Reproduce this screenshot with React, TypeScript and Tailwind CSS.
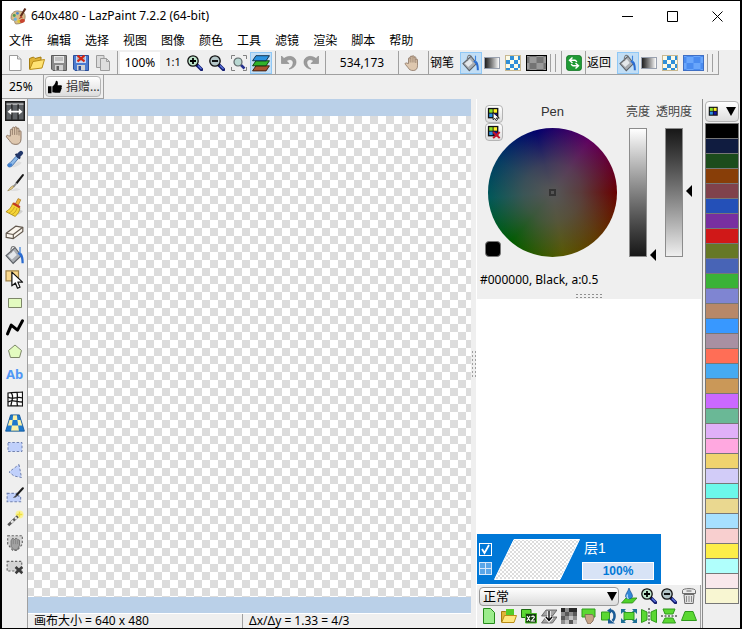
import { useState } from 'react';
import type { ReactNode } from 'react';
import clsx from 'clsx';

const MENUS = ['文件', '编辑', '选择', '视图', '图像', '颜色', '工具', '滤镜', '渲染', '脚本', '帮助'];

const PALETTE = [
  '#000000', '#101c40', '#1c4c1c', '#883e08', '#80424c', '#2450b8', '#782fa0', '#d01818',
  '#667826', '#4864b6', '#3ab237', '#7f85d2', '#b88868', '#3898ff', '#a890a2', '#ff6e56',
  '#46aaf2', '#ca9858', '#cb68ff', '#6ab896', '#e0b0f8', '#ffa8e0', '#f0d36e', '#d2ccf8',
  '#6cf8ea', '#ead890', '#a6e0ff', '#f8cfcf', '#fdee48', '#b0fffc', '#f9e8ec', '#f8f6d2',
];

function Svg({ size = 16, children }: { size?: number; children: ReactNode }) {
  return (
    <svg width={size} height={size} viewBox="0 0 16 16" fill="none" aria-hidden="true" className="shrink-0">
      {children}
    </svg>
  );
}

/* ---------- file icons ---------- */

function AppIcon() {
  return (
    <Svg size={17}>
      <path d="M1 9C1 4 5 2 9 3c4 0 6 3 5 7-1 4-5 5-8 5-2 0-1-2-2-3S1 12 1 9Z" fill="#d8bd8a" stroke="#8b7659" strokeWidth=".7" />
      <circle cx="4" cy="7" r="1.4" fill="#4f9d52" />
      <circle cx="7" cy="5" r="1.3" fill="#4a86cf" />
      <circle cx="5" cy="10.5" r="1.5" fill="#6bb4e2" />
      <circle cx="8.5" cy="12.5" r="1.5" fill="#dcc934" />
      <path d="M14.5 0.5 10 8" stroke="#5b2b1b" strokeWidth="2" />
      <path d="M10.5 7 8 10.5l4-1.5Z" fill="#b34a2e" />
      <path d="M9 12c2-3 5-2 5 0 0 1.5-2 2.5-4 2Z" fill="#c8452f" />
    </Svg>
  );
}

function NewIcon() {
  return (
    <Svg>
      <path d="M2.5 .5h8l3.5 3.500v11.500h-11.500Z" fill="#fff" stroke="#9a9a9a" />
      <path d="M10.5 .5V4H14" fill="#e8e8e8" stroke="#9a9a9a" />
    </Svg>
  );
}

function OpenIcon() {
  return (
    <Svg>
      <path d="M.5 14V3.5l4-1.5 1.5 1.5 6-1.5v3" fill="#e0b437" stroke="#a57c10" />
      <path d="M.7 14.5 4 6.5l11.5-2L13 13Z" fill="#ffe373" stroke="#b98d17" />
    </Svg>
  );
}

function FloppyIcon({ blue = false }: { blue?: boolean }) {
  return (
    <Svg>
      <path d="M.5 .5h15v15H2L.5 14Z" fill={blue ? '#4b7bd0' : '#8a8a8a'} stroke={blue ? '#2a4f9a' : '#5c5c5c'} />
      <path d="M3 1h10v7H3Z" fill={blue ? '#c8d8f4' : '#e6e6e6'} />
      <path d="M4 3h8M4 5h8" stroke="#9a9a9a" />
      <path d="M4 10h8v5.5H4Z" fill="#d2d2d2" />
      <path d="M5.5 11H8v4H5.5Z" fill={blue ? '#2a4f9a' : '#606060'} />
      {blue && <path d="m4.5 .5 7 6M11.5 .5l-7 6" stroke="#d42612" strokeWidth="2.2" />}
    </Svg>
  );
}

function CopyIcon() {
  return (
    <Svg>
      <path d="M1.5 .5H9v12H1.5Z" fill="#dcdcdc" stroke="#9c9c9c" />
      <path d="M5.5 3.5h6l3 3v9h-9Z" fill="#dedede" stroke="#9c9c9c" />
      <path d="M11.5 3.5v3h3" stroke="#9c9c9c" />
    </Svg>
  );
}

/* ---------- view icons ---------- */

function MagnifierIcon({ kind }: { kind: 'in' | 'out' }) {
  return (
    <Svg>
      <path d="m10 10 4.500 4.500" stroke="#111a6e" strokeWidth="3.4" strokeLinecap="round" />
      <path d="m11 10.500 3.500 3.500" stroke="#5d76e0" strokeWidth="1.2" />
      <circle cx="6" cy="6" r="5.2" fill={kind === 'in' ? '#bfe6cc' : '#b4c6c8'} stroke="#101010" strokeWidth="1.3" />
      <path d={kind === 'in' ? 'M3 6h6M6 3v6' : 'M3 6h6'} stroke="#000" strokeWidth="1.8" />
    </Svg>
  );
}

function FitIcon() {
  return (
    <Svg>
      <path d="M.5 4V.5H4M12 .5h3.500V4M15.500 12v3.500H12M4 15.500H.5V12" stroke="#808080" />
      <path d="m9.500 9.500 4 4" stroke="#26338f" strokeWidth="2.5" />
      <circle cx="7" cy="7" r="4" fill="#b9d8d2" stroke="#5d6668" strokeWidth="1.2" />
    </Svg>
  );
}

function LayersIcon() {
  return (
    <Svg size={18}>
      <path d="M3.5 10.5h12l-3 4.500H.5Z" fill="#a85430" stroke="#35180a" strokeWidth=".8" />
      <path d="M3.5 6h12l-3 4.500H.5Z" fill="#31b32a" stroke="#0a3a08" strokeWidth=".8" />
      <path d="M3.5 1.5h12l-3 4.500H.5Z" fill="#2b93e0" stroke="#08263f" strokeWidth=".8" />
    </Svg>
  );
}

function UndoIcon({ flip = false }: { flip?: boolean }) {
  return (
    <Svg>
      <g transform={flip ? 'matrix(-1 0 0 1 16 0)' : undefined}>
        <path d="M.5 1v7.500H8L5.500 6C9 3 13 5 12 9c-.5 2-2 4-4 5 4-.5 7-3 7-7 0-5.500-7-7.500-12-3.500Z" fill="#9b9b9b" stroke="#858585" strokeWidth=".6" />
      </g>
    </Svg>
  );
}

/* ---------- tool icons ---------- */

function HandIcon({ size = 16 }: { size?: number }) {
  return (
    <Svg size={size}>
      <path
        d="M4.500 8.500V3.600c0-1.200 1.700-1.200 1.700 0V2c0-1.300 1.900-1.300 1.900 0v-.4c0-1.300 1.900-1.300 1.900 0v1c0-1.200 1.800-1.200 1.800 0v2.200c0-1.100 1.700-1.100 1.700 0v6c0 3-1.500 4.700-4.300 4.700-2.700 0-4-.8-5.400-3.200L1.300 9.300c-.6-1.100.7-2 1.600-1.100Z"
        fill="#dec7ae"
        stroke="#8a7462"
        strokeWidth=".8"
      />
      <path d="M6.200 3.500v4M8.100 2v5.500M10 2.500v5M11.800 4.500v3.500" stroke="#8a7462" strokeWidth=".7" />
    </Svg>
  );
}

function BucketIcon({ size = 18 }: { size?: number }) {
  return (
    <Svg size={size}>
      <path d="M.8 8.500 8 2l5 6.500-6.500 6.300Z" fill="#a9adb2" stroke="#5c6066" strokeWidth=".9" />
      <path d="m2.500 8.500 4.500-4 2.500 3.500-4 3.500Z" fill="#e4e7ea" />
      <path d="M8 2c-2-2-4 0-3 4" stroke="#777" strokeWidth=".9" />
      <path d="M10 6.500c3-1.500 5 1 5 8h-1.800c0-3-.4-5-1.400-6Z" fill="#2a6bd0" />
      <path d="M12 1.500v5.500" stroke="#3f86e0" />
    </Svg>
  );
}

function PanelsIcon() {
  return (
    <Svg size={20}>
      <path d="M.5 .5h15v15H.5Z" fill="#5d6165" stroke="#1c1c1c" strokeWidth="1.3" />
      <path d="M1.200 2.500h13.600" stroke="#c9c9c9" />
      <path d="M5.500 2.500v12.500M10.500 2.500v12.500" stroke="#1b1b1b" />
      <path d="M4.500 8.500h7" stroke="#fff" strokeWidth="1.4" />
      <path d="M2 8.500 5 6v5ZM14 8.500 11 6v5Z" fill="#fff" />
    </Svg>
  );
}

function DropperIcon() {
  return (
    <Svg size={18}>
      <path d="M4 15c3 1 8-1 10-4l-3-1Z" fill="#dedede" />
      <path d="m9 5.500 2 2-5.500 6.500c-1.500 1.500-4 1.500-4-.3C1.500 12 3 11.800 4 11Z" fill="#8db9e8" stroke="#3f6ea8" strokeWidth=".8" />
      <path d="M3 12c-2 .5-2 3 0 3s3-2 2-3Z" fill="#3d7fd0" />
      <path d="m8.500 3.500 4 4" stroke="#18264a" strokeWidth="1.8" />
      <path d="m11 5 2.300-2.300" stroke="#22376a" strokeWidth="3.8" strokeLinecap="round" />
    </Svg>
  );
}

function PenIcon() {
  return (
    <Svg size={18}>
      <path d="M3 15c4 .5 8 0 10-1.500l-4-1Z" fill="#dedede" />
      <path d="M15 1 9.500 8" stroke="#1a1a1a" strokeWidth="1.8" strokeLinecap="round" />
      <path d="m9.500 8-3 3.500" stroke="#8e8e8e" strokeWidth="1.6" />
      <path d="M7 11c-.5 2-3 3-5.500 4C3 13 4 11.500 6 10.500Z" fill="#e6cc88" stroke="#6a5a30" strokeWidth=".4" />
    </Svg>
  );
}

function BroomIcon() {
  return (
    <Svg size={19}>
      <path d="M5 14c4 1.500 9-.5 10-3l-4-2Z" fill="#cfcfcf" />
      <path d="m11 .5 2.300 1-2.300 5-2.500-1.300Z" fill="#efb23a" stroke="#9a6a12" strokeWidth=".5" />
      <path d="m6.500 4.500 6 3.500c0 3-1.500 5.500-4 7.500L.8 11.500C3.800 10 5.500 7.500 6.500 4.500Z" fill="#f5d436" stroke="#a98812" strokeWidth=".7" />
      <path d="m6.800 4.500 5.700 3.300" stroke="#c23a20" strokeWidth="2" />
      <path d="M3.500 12.500c2-1 3.500-2.500 4.500-5M6 13.800c2-1 3.500-2.800 4-5.300" stroke="#b8921a" strokeWidth=".6" />
    </Svg>
  );
}

function EraserIcon() {
  return (
    <Svg size={19}>
      <path d="M1 9.500 9 3.500l6 1v3.500L7 14l-6-1Z" fill="#fbf6ee" stroke="#62584e" strokeLinejoin="round" />
      <path d="m1 9.500 6 1 8-6M7 10.500V14" stroke="#62584e" strokeLinejoin="round" />
    </Svg>
  );
}

function SelectShapeIcon() {
  return (
    <Svg size={20}>
      <path d="M.8 1.500h10v8H.8Z" fill="#fbd98c" stroke="#a08348" />
      <path d="M5.500 2.500v11l2.800-2.300 1.700 4.200 2-.9-1.700-4H14Z" fill="#fff" stroke="#111" strokeLinejoin="round" />
    </Svg>
  );
}

function RectIcon() {
  return (
    <Svg>
      <path d="M1.500 3.500h13v9h-13Z" fill="#e3fbc0" stroke="#7d8668" />
    </Svg>
  );
}

function PolylineIcon() {
  return (
    <Svg size={20}>
      <path d="M2 13.500 5 6.500l5 4L14 3" stroke="#000" strokeWidth="2.4" strokeLinecap="round" strokeLinejoin="round" />
    </Svg>
  );
}

function PolygonIcon() {
  return (
    <Svg>
      <path d="M8 2 14.500 7.500 12.500 14.500h-9L1.500 7.500Z" fill="#e3fbc0" stroke="#7d8668" />
    </Svg>
  );
}

function DeformIcon() {
  return (
    <Svg>
      <path d="M1 2c4-1 9-.5 14.500-1v14c-5-.5-10 0-14.500 0Z" fill="#fff" stroke="#111" strokeWidth="1.2" />
      <path d="M4 2c4 3 0 8 0 13M10 1.500c1.500 5-1 8 .5 13.500M1 6c4 3 9-1 14.500 1M1 11c5-3 9 0 14 0" stroke="#111" strokeWidth="1.3" />
    </Svg>
  );
}

function PerspectiveIcon() {
  return (
    <Svg size={20}>
      <path d="M4.500 1.500h7L15.500 14.500H.5Z" fill="#1d78cc" />
      <path d="M6.500 1.500h3l.4 4H6.100ZM3.300 5.500h2.800l-.6 4.500H2ZM9.900 5.500h2.900L14 10h-3.500ZM5.500 10h5l.7 4.500H4.800Z" fill="#fbf1a6" />
      <path d="M4.500 1.500h7L15.500 14.500H.5Z" stroke="#16599a" strokeWidth=".7" />
    </Svg>
  );
}

function SelRectIcon() {
  return (
    <Svg>
      <path d="M1 3.500h14v9H1Z" fill="#c0d0fb" stroke="#7182b0" strokeDasharray="2.500 1.800" />
    </Svg>
  );
}

function SelPolyIcon() {
  return (
    <Svg>
      <path d="m12 1.500 2.500 13L7 13 2 9Z" fill="#c0d0fb" stroke="#7182b0" strokeDasharray="2.500 1.800" />
    </Svg>
  );
}

function SelPenIcon() {
  return (
    <Svg size={18}>
      <path d="M1 6.500h10v2.500h2v5H1Z" fill="#c0d0fb" stroke="#7182b0" strokeDasharray="2.200 1.600" />
      <path d="M15 2 9.500 8" stroke="#1b1b1b" strokeWidth="1.8" strokeLinecap="round" />
      <path d="M9.500 7.500 6 10.500l2.500-.3 2-1.700Z" fill="#444" />
    </Svg>
  );
}

function WandIcon() {
  return (
    <Svg size={18}>
      <circle cx="12" cy="4" r="3.6" fill="#fbf39a" />
      <path d="M12 1.500v5M9.500 4h5" stroke="#f0e040" strokeWidth="1.2" />
      <path d="m2 13.500 8.500-8" stroke="#555" strokeWidth="2.4" />
      <path d="m4.500 11.200 2-1.900M8 7.900l1.500-1.400" stroke="#e8e8e8" strokeWidth="2" />
    </Svg>
  );
}

function SelHandIcon() {
  return (
    <Svg size={18}>
      <path d="M1.500 1.500h13V9L10 14.500H6L1.500 9Z" fill="#d4d4d4" stroke="#666" strokeDasharray="2 1.500" />
      <path d="M4.500 11V6l1.500-2.500L7.500 5 9 3.500 10.500 5 12 5.500V10l-2 4H7Z" fill="#a2a2a2" stroke="#6e6e6e" strokeWidth=".8" />
      <path d="M6.500 5v4M8.500 5v4M10.300 5.500V9" stroke="#7a7a7a" strokeWidth=".6" />
    </Svg>
  );
}

function SelClearIcon() {
  return (
    <Svg size={18}>
      <path d="M1 3h13v8.500H1Z" fill="#d4d4d4" stroke="#666" strokeDasharray="2 1.500" />
      <path d="m8.500 8 6 5.500M14.500 8l-6 5.500" stroke="#3b3b3b" strokeWidth="2.3" />
    </Svg>
  );
}

/* ---------- fill icons ---------- */

function GradientIcon() {
  return <span className="h-3 w-4 border border-gray-400 bg-linear-to-r from-[#202020] to-white" />;
}

function PatternIcon() {
  return (
    <span className="size-4 border border-[#c8b890] bg-[#fbfbe8] bg-[repeating-conic-gradient(#2f8fd8_0_25%,#fbfbe8_0_50%)] bg-[length:8px_8px]" />
  );
}

function TextureIcon({ blue = false }: { blue?: boolean }) {
  return (
    <span
      className={clsx(
        'h-4 w-[21px] border bg-[length:14px_12px] bg-center',
        blue
          ? 'border-[#3f6fc4] bg-[repeating-conic-gradient(#4a8cf0_0_25%,#69a6fb_0_50%)]'
          : 'border-black bg-[repeating-conic-gradient(#747474_0_25%,#9a9a9a_0_50%)]',
      )}
    />
  );
}

function SwapIcon() {
  return (
    <Svg>
      <rect x=".3" y=".3" width="15.4" height="15.4" rx="3.5" fill="#1f9a35" stroke="#0d6a20" strokeWidth=".7" />
      <path d="M6.500 2.500 3.500 5.300 6.500 8M3.500 5.300H9l2 1.500M9.500 8l3 2.700-3 2.800M12.500 10.700H7l-2-1.500" stroke="#fff" strokeWidth="1.4" />
    </Svg>
  );
}

function ThumbIcon() {
  return (
    <Svg size={14}>
      <path d="M0 7h4v8H0ZM5 7.500C7 6 8.500 4 9 1c1.500-.5 3 1 2 5h4c1.500.5 1 2 .4 2.300.6.9.3 1.900-.4 2.200.4.900 0 1.800-.7 2.100.2 1-.3 2.100-1.500 2.100H8.500L5 14Z" fill="#000" />
    </Svg>
  );
}

function ColorsIcon({ mark }: { mark?: 'pick' | 'remove' }) {
  return (
    <Svg size={mark ? 14 : 12}>
      <path d="M1 1h12v12H1Z" fill="#111" />
      <path d="M2.500 2.500h4v4h-4Z" fill="#8be22a" />
      <path d="M7.500 2.500h4v4h-4Z" fill="#fff12a" />
      <path d="M2.500 7.500h4v4h-4Z" fill="#2a8fe0" />
      <path d="M7.500 7.500h4v4h-4Z" fill="#1414a8" />
      {mark === 'pick' && <path d="M7 6.500v8l2-1.500 1.500 2.500 1.500-1-1.300-2H14Z" fill="#fff" stroke="#000" strokeWidth=".9" />}
      {mark === 'remove' && <path d="m7 8 7.500 7M14.500 8 7 15" stroke="#c4142a" strokeWidth="2.3" />}
    </Svg>
  );
}

/* ---------- layer icons ---------- */

const LAYER_ICONS: { name: string; icon: ReactNode }[] = [
  {
    name: 'New layer',
    icon: <path d="M2.500 .5h7l4 4v11h-11Z" fill="#9bec8c" stroke="#258a1a" />,
  },
  {
    name: 'Open layer',
    icon: (
      <>
        <path d="M.5 14V3.500h4L6 5" fill="#e0b437" stroke="#a57c10" />
        <path d="M5 1h8v8H5Z" fill="#54cc2a" />
        <path d="M.7 14.500 3.500 7.500h12L13 14.500Z" fill="#ffe780" stroke="#b98d17" />
      </>
    ),
  },
  {
    name: 'Duplicate layer',
    icon: (
      <>
        <path d="M.5 1.500H10v8H.5Z" fill="#5bd832" stroke="#1c6a10" />
        <path d="M4.500 5.500h11V15h-11Z" fill="#163c10" stroke="#48b828" />
        <path d="m6 8 3 5M9 8l-3 5M10.500 9c1-1.500 3-1 2.800.5L10.500 13H14" stroke="#fff" strokeWidth="1.1" />
      </>
    ),
  },
  {
    name: 'Merge layer',
    icon: (
      <>
        <path d="M5 9h11l-4.500 6H.5ZM5 2h11l-4.500 6H.5Z" fill="#a4a4a4" stroke="#555" strokeWidth=".8" />
        <path d="M8 3v9M5 9l3 3.500L11 9" stroke="#fff" strokeWidth="3.4" />
        <path d="M8 3v9M5 9l3 3.500L11 9" stroke="#000" strokeWidth="1.3" />
      </>
    ),
  },
  {
    name: 'Rasterize',
    icon: (
      <>
        <path d="M0 0h16v16H0Z" fill="#585858" />
        <path d="M4 0h4v4H4ZM0 4h4v4H0ZM8 4h4v4H8ZM4 8h4v4H4ZM12 8h4v4h-4ZM0 12h4v4H0Z" fill="#8c8c8c" />
        <path d="M12 12h4v4h-4ZM8 8h4v4H8ZM4 12h4v4H4Z" fill="#c2c2c2" />
        <path d="M0 0h4v4H0ZM12 0h4v4h-4ZM8 0h4v4H8Z" fill="#282828" />
      </>
    ),
  },
  {
    name: 'Move layer',
    icon: (
      <>
        <path d="M1 1h13v8H1Z" fill="#5bd832" stroke="#2f9a1c" />
        <path d="M4 6.500h7.500L13 9l-1 4-3 3H7L4.500 11Z" fill="#c6a488" stroke="#7a6554" strokeWidth=".8" />
      </>
    ),
  },
  {
    name: 'Rotate layer',
    icon: (
      <>
        <path d="M.5 4h8v8h-8Z" fill="#5bd832" stroke="#2f9a1c" />
        <path d="M9 2.500c5 0 6 7 2.500 10.500" stroke="#1c5c96" strokeWidth="2.5" />
        <path d="M7 10.500 14 15.500H7Z" fill="#1c5c96" />
        <path d="M10 0v5.500L6 2.500Z" fill="#1c5c96" />
      </>
    ),
  },
  {
    name: 'Zoom layer',
    icon: (
      <>
        <path d="m2 2.500 12 11M14 2.500l-12 11" stroke="#1c7a86" strokeWidth="2" />
        <path d="M0 1h5L0 6ZM16 1h-5l5 5ZM0 15h5l-5-5ZM16 15h-5l5-5Z" fill="#1f6f96" />
        <path d="M3 4.500h10v7H3Z" fill="#5bd832" stroke="#2f9a1c" />
      </>
    ),
  },
  {
    name: 'Horizontal flip',
    icon: (
      <>
        <path d="M.5 1.500 6 4v8l-5.500 2.500ZM15.500 1.500 10 4v8l5.500 2.500Z" fill="#5bd832" stroke="#2f9a1c" />
        <path d="M8 0v16" stroke="#111" strokeDasharray="2 1.500" />
      </>
    ),
  },
  {
    name: 'Vertical flip',
    icon: (
      <>
        <path d="M2 1h12L12 6H4ZM4 10h8l2.500 5h-13Z" fill="#5bd832" stroke="#2f9a1c" />
        <path d="M0 8h16" stroke="#111" strokeDasharray="2 1.500" />
      </>
    ),
  },
  {
    name: 'Layer shape',
    icon: <path d="M4 3.500h8l3.500 9H.5Z" fill="#5bd832" stroke="#2f9a1c" />,
  },
];

const TOOLS: { name: string; icon: ReactNode }[] = [
  { name: 'Dock panels', icon: <PanelsIcon /> },
  { name: 'Hand', icon: <HandIcon size={19} /> },
  { name: 'Color picker', icon: <DropperIcon /> },
  { name: 'Pen', icon: <PenIcon /> },
  { name: 'Brush', icon: <BroomIcon /> },
  { name: 'Eraser', icon: <EraserIcon /> },
  { name: 'Flood fill', icon: <BucketIcon size={20} /> },
  { name: 'Edit shape', icon: <SelectShapeIcon /> },
  { name: 'Rectangle', icon: <RectIcon /> },
  { name: 'Polyline', icon: <PolylineIcon /> },
  { name: 'Polygon', icon: <PolygonIcon /> },
  { name: 'Text', icon: <span className="text-[13px] font-bold text-[#4f97f5]">Ab</span> },
  { name: 'Deformation', icon: <DeformIcon /> },
  { name: 'Perspective', icon: <PerspectiveIcon /> },
  { name: 'Select rectangle', icon: <SelRectIcon /> },
  { name: 'Select polygon', icon: <SelPolyIcon /> },
  { name: 'Select pen', icon: <SelPenIcon /> },
  { name: 'Magic wand', icon: <WandIcon /> },
  { name: 'Move selection', icon: <SelHandIcon /> },
  { name: 'Deselect', icon: <SelClearIcon /> },
];

/* ---------- building blocks ---------- */

function IconButton({ label, active = false, className = 'w-[22px]', children }: {
  label: string;
  active?: boolean;
  className?: string;
  children: ReactNode;
}) {
  return (
    <button
      type="button"
      aria-label={label}
      className={clsx(
        'flex h-[22px] shrink-0 items-center justify-center',
        active && 'border border-[#90c8f6] bg-[#c2def5]',
        className,
      )}
    >
      {children}
    </button>
  );
}

function Group({ className, children }: { className?: string; children: ReactNode }) {
  return (
    <div className={clsx('flex h-6 shrink-0 items-center border-r border-b border-[#a0a0a0]', className)}>{children}</div>
  );
}

function FillGroup({ label, blue = false }: { label: string; blue?: boolean }) {
  return (
    <Group className="w-[133px] pl-px">
      <span className="w-[30px] shrink-0">{label}</span>
      <IconButton label={`${label} fill`} active><BucketIcon /></IconButton>
      <IconButton label={`${label} gradient`} className="w-5"><GradientIcon /></IconButton>
      <IconButton label={`${label} pattern`}><PatternIcon /></IconButton>
      <IconButton label={`${label} texture`} className="w-6"><TextureIcon blue={blue} /></IconButton>
      <span className="ml-0.5 h-[18px] w-1.5 shrink-0 border-x border-[#a0a0a0]" />
    </Group>
  );
}

function WindowButton({ label, d }: { label: string; d: string }) {
  return (
    <button type="button" aria-label={label} className="flex h-full w-[45px] items-center justify-center">
      <svg width="11" height="11" viewBox="0 0 11 11" fill="none" aria-hidden="true">
        <path d={d} stroke="#000" />
      </svg>
    </button>
  );
}

function Arrow({ className }: { className: string }) {
  return (
    <svg width="6" height="12" viewBox="0 0 6 12" aria-hidden="true" className={clsx('absolute', className)}>
      <path d="M6 0v12L0 6Z" fill="#000" />
    </svg>
  );
}

function ColorSlider({ label, value, bar, arrow }: { label: string; value: number; bar: string; arrow: string }) {
  return (
    <label className="relative flex flex-col items-center">
      <span className="h-[29px] leading-[26px] text-[#444]">{label}</span>
      <input
        type="range"
        defaultValue={value}
        className={clsx(
          'h-[129px] w-[18px] appearance-none border border-[#8c8c8c] bg-linear-to-b [writing-mode:vertical-lr] [&::-webkit-slider-thumb]:opacity-0',
          bar,
        )}
      />
      <Arrow className={arrow} />
    </label>
  );
}

function ColorPanel() {
  return (
    <section className="h-[200px] shrink-0 bg-[#efefef]">
      <div className="flex pl-2">
        <div className="relative pl-[3px]">
          <div className="h-[29px] text-center font-['Liberation_Sans',sans-serif] text-[13px] leading-[26px] text-[#333]">Pen</div>
          <div className="flex size-[129px] items-center justify-center rounded-full bg-[radial-gradient(circle_closest-side,#555_5%,#555555b0_45%,transparent_100%),conic-gradient(from_90deg,#680000,#603800_45deg,#585800_80deg,#005c00_130deg,#005858_175deg,#003c64_210deg,#00006c_255deg,#600060_305deg,#680000)]">
            <span className="size-[7px] border-2 border-[#333]" />
          </div>
          <div className="absolute top-1.5 left-0 flex flex-col">
            <button type="button" aria-label="Pick color" className="flex size-[18px] items-center justify-center rounded-sm border border-[#b4b4b4] bg-linear-to-b from-white to-[#ddd]">
              <ColorsIcon mark="pick" />
            </button>
            <button type="button" aria-label="Remove color" className="flex size-[18px] items-center justify-center rounded-sm border border-[#b4b4b4] bg-linear-to-b from-white to-[#ddd]">
              <ColorsIcon mark="remove" />
            </button>
          </div>
          <span className="absolute bottom-0 left-0 size-4 rounded-sm border border-[#777] bg-black" />
        </div>
        <div className="ml-[9px] flex gap-1.5">
          <ColorSlider label="亮度" value={0} bar="from-white to-[#181818]" arrow="-right-1.5 -bottom-1" />
          <ColorSlider label="透明度" value={50} bar="from-[#181818] to-[#efefef]" arrow="right-0 bottom-[60px]" />
        </div>
      </div>
      <div className="mt-3 pl-[3px] leading-[22px]">#000000, Black, a:0.5</div>
      <div className="mx-auto mt-0.5 h-1.5 w-7 bg-[radial-gradient(#909090_1px,transparent_1px)] bg-[length:4px_3px]" />
    </section>
  );
}

function LayerItem() {
  const [visible, setVisible] = useState(true);

  return (
    <div className="flex h-[50px] w-[184px] items-center bg-[#0078d7] pl-0.5 text-white">
      <div className="flex w-3 flex-col gap-1.5">
        <label className="relative block size-[13px]">
          <input
            type="checkbox"
            aria-label="层1"
            checked={visible}
            onChange={(e) => setVisible(e.target.checked)}
            className="block size-[13px] appearance-none border border-white"
          />
          {visible && (
            <svg width="13" height="13" viewBox="0 0 13 13" fill="none" aria-hidden="true" className="pointer-events-none absolute inset-0">
              <path d="m3 6 2.500 4L10 2" stroke="#fff" strokeWidth="1.8" />
            </svg>
          )}
        </label>
        <svg width="13" height="13" viewBox="0 0 13 13" aria-hidden="true">
          <path d="M0 0h13v13H0Z" fill="#d8e8fa" />
          <path d="M1 1h5v5H1ZM7 1h5v5H7ZM1 7h5v5H1ZM7 7h5v5H7Z" fill="#5aa6e8" />
        </svg>
      </div>
      <svg width="86" height="41" viewBox="0 0 86 41" aria-hidden="true" className="ml-[3px] shrink-0">
        <defs>
          <pattern id="thumb" width="4" height="4" patternUnits="userSpaceOnUse">
            <path d="M0 0h4v4H0Z" fill="#fff" />
            <path d="M0 0h2v2H0ZM2 2h2v2H2Z" fill="#dcdcdc" />
          </pattern>
        </defs>
        <path d="M20 .5h65.500L66 40.500H.5Z" fill="url(#thumb)" stroke="#fff" />
      </svg>
      <div className="ml-0.5 flex w-[72px] flex-col">
        <span className="pl-0.5 font-['Liberation_Sans','Noto_Sans_CJK_SC',sans-serif] text-sm leading-5">层1</span>
        <button type="button" className="mt-1 h-[18px] border border-white bg-[#d8e3f6] text-center font-['Liberation_Sans',sans-serif] text-xs leading-4 font-bold text-[#0078d7]">
          100%
        </button>
      </div>
    </div>
  );
}

function LayerToolbar() {
  return (
    <div className="flex h-[43px] shrink-0 flex-col border-r border-[#a0a0a0] bg-[#efefef] pt-px pl-0.5">
      <div className="flex h-5 items-center">
        <div className="relative w-[140px] shrink-0">
          <select
            aria-label="Blend mode"
            className="block h-[19px] w-full appearance-none rounded-sm border border-[#999] bg-linear-to-b from-white to-[#dcdcdc] pl-[3px] text-[13px] leading-[17px]"
          >
            <option>正常</option>
          </select>
          <svg width="10" height="9" viewBox="0 0 10 9" aria-hidden="true" className="pointer-events-none absolute top-[5px] right-0.5">
            <path d="M0 0h10L5 9Z" fill="#000" />
          </svg>
        </div>
        <IconButton label="Opacity" className="w-5">
          <Svg>
            <path d="M5 10h11l-4.500 5H.5Z" fill="#4fd22a" stroke="#2b8a18" strokeWidth=".8" />
            <path d="M8 0c1 3.500 3.500 5.500 3.500 8.500a3.700 3.700 0 0 1-7 0C4.500 5.500 7 3.500 8 0Z" fill="#3288d8" stroke="#164f90" strokeWidth=".7" />
            <path d="M6.500 6.500c-1 2 0 4 1.200 4" stroke="#c4e3fb" strokeWidth="1.2" />
          </Svg>
        </IconButton>
        <IconButton label="Zoom in thumbnails" className="w-5"><MagnifierIcon kind="in" /></IconButton>
        <IconButton label="Zoom out thumbnails" className="w-5"><MagnifierIcon kind="out" /></IconButton>
        <IconButton label="Remove layer" className="w-5">
          <Svg>
            <path d="M3 6.500h10l-.8 9H3.800Z" fill="#e2e2e2" stroke="#6c6c6c" />
            <path d="M5.500 8v6M8 8v6M10.500 8v6" stroke="#8a8a8a" />
            <path d="M1.500 2.500c0-2.500 13-2.500 13 0v3h-13Z" fill="#ececec" stroke="#6c6c6c" />
            <path d="M5.500 3h5" stroke="#777" strokeWidth="1.2" />
          </Svg>
        </IconButton>
      </div>
      <div className="flex h-5 items-center">
        {LAYER_ICONS.map(({ name, icon }) => (
          <IconButton key={name} label={name} className="w-5">
            <Svg>{icon}</Svg>
          </IconButton>
        ))}
      </div>
    </div>
  );
}

function PaletteColumn() {
  return (
    <aside className="w-[38px] shrink-0 border-l border-[#8c8c8c] pt-0.5 pr-px pl-0.5">
      <button type="button" aria-label="Palette menu" className="flex h-[21px] w-full items-center justify-between rounded-sm border border-[#b4b4b4] bg-linear-to-b from-white to-[#ddd] px-0.5">
        <ColorsIcon />
        <svg width="10" height="9" viewBox="0 0 10 9" aria-hidden="true">
          <path d="M0 0h10L5 9Z" fill="#000" />
        </svg>
      </button>
      <div className="mt-px border-x border-t border-[#777]">
        {PALETTE.map((color) => (
          <button
            key={color}
            type="button"
            aria-label={color}
            className="block h-[15px] w-full border-b border-[#777]"
            style={{ backgroundColor: color }}
          />
        ))}
      </div>
    </aside>
  );
}

export default function App() {
  return (
    <div className="flex h-screen flex-col overflow-hidden border-x-2 border-y border-black bg-[#efefef] font-['Noto_Sans','Noto_Sans_CJK_SC',sans-serif] text-xs text-black select-none">
      <header className="flex h-[30px] shrink-0 items-center bg-white pl-2">
        <AppIcon />
        <h1 className="ml-1 flex-1">640x480 - LazPaint 7.2.2 (64-bit)</h1>
        <WindowButton label="Minimize" d="M0 5.500h11" />
        <WindowButton label="Maximize" d="M.5 .5h10v10H.5Z" />
        <WindowButton label="Close" d="m.5 .5 10 10M10.500 .5l-10 10" />
      </header>

      <nav className="flex h-[19px] shrink-0 items-center gap-3.5 bg-white pl-[7px]">
        {MENUS.map((menu) => (
          <button key={menu} type="button" className="leading-4">{menu}</button>
        ))}
      </nav>

      <div className="shrink-0 pt-px">
        <div className="flex">
          <Group className="w-[116px] pl-0.5">
            <IconButton label="New"><NewIcon /></IconButton>
            <IconButton label="Open"><OpenIcon /></IconButton>
            <IconButton label="Save"><FloppyIcon /></IconButton>
            <IconButton label="Save as"><FloppyIcon blue /></IconButton>
            <IconButton label="Copy"><CopyIcon /></IconButton>
          </Group>
          <Group className="w-[158px] pl-0.5">
            <button type="button" className="mr-0.5 h-[22px] w-10 bg-white">100%</button>
            <IconButton label="Original size"><span className="text-[11px]">1:1</span></IconButton>
            <IconButton label="Zoom in"><MagnifierIcon kind="in" /></IconButton>
            <IconButton label="Zoom out"><MagnifierIcon kind="out" /></IconButton>
            <IconButton label="Zoom fit"><FitIcon /></IconButton>
            <IconButton label="Layer window" active><LayersIcon /></IconButton>
          </Group>
          <Group className="w-[50px] pl-0.5">
            <IconButton label="Undo"><UndoIcon /></IconButton>
            <IconButton label="Redo"><UndoIcon flip /></IconButton>
          </Group>
          <Group className="w-[73px] justify-center">534,173</Group>
          <Group className="w-[30px] pl-0.5">
            <IconButton label="Hand"><HandIcon /></IconButton>
          </Group>
          <FillGroup label="钢笔" />
          <Group className="w-6 justify-center">
            <IconButton label="Swap colors"><SwapIcon /></IconButton>
          </Group>
          <FillGroup label="返回" blue />
        </div>
        <div className="flex">
          <Group className="w-[42px] pl-[7px]">25%</Group>
          <Group className="w-[60px] pl-px">
            <button type="button" className="flex h-[21px] w-14 items-center gap-1 rounded-sm border border-[#b4b4b4] bg-linear-to-b from-white to-[#dcdcdc] pl-0.5 leading-4 whitespace-nowrap text-[#333]">
              <ThumbIcon />
              捐赠...
            </button>
          </Group>
        </div>
      </div>

      <div className="flex min-h-0 flex-1">
        <aside className="flex w-[26px] shrink-0 flex-col border-r border-[#a0a0a0]">
          {TOOLS.map(({ name, icon }) => (
            <button key={name} type="button" aria-label={name} className="flex h-6 w-full items-center justify-center">
              {icon}
            </button>
          ))}
        </aside>

        <main className="flex min-w-0 flex-1 flex-col">
          <div className="flex flex-1 flex-col bg-[#bad0e8] pt-[17px] pb-4">
            <div className="flex-1 bg-white bg-[repeating-conic-gradient(#dcdcdc_0_25%,#fff_0_50%)] bg-[length:16px_16px] bg-[position:-2px_0]" />
          </div>
          <footer className="flex h-[15px] shrink-0 items-center border-t border-white leading-[14px]">
            <span className="h-full w-[215px] border-r border-[#a0a0a0] pl-1.5">画布大小 = 640 x 480</span>
            <span className="h-full pl-1.5">Δx/Δy = 1.33 = 4/3</span>
          </footer>
        </main>

        <div className="flex w-1.5 shrink-0 items-center border-r border-white">
          <span className="h-7 w-1.5 bg-[radial-gradient(#a0a0a0_1px,transparent_1px)] bg-[length:3px_4px]" />
        </div>

        <div className="mr-px flex w-[224px] shrink-0 flex-col">
          <ColorPanel />
          <div className="flex flex-1 flex-col justify-end bg-white pb-px">
            <LayerItem />
          </div>
          <LayerToolbar />
        </div>

        <PaletteColumn />
      </div>
    </div>
  );
}
